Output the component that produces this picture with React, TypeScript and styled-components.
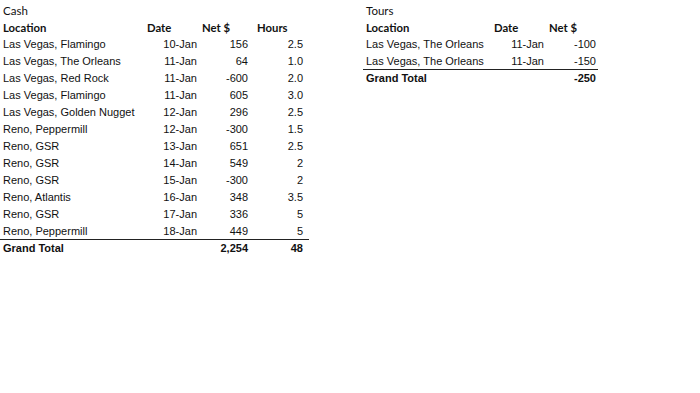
import styled, { createGlobalStyle } from 'styled-components'

const GlobalStyle = createGlobalStyle`
  html, body {
    margin: 0;
    padding: 0;
    background: #fff;
  }
  body {
    width: 700px;
    height: 393px;
    overflow: hidden;
    font-family: 'Liberation Sans', Arial, sans-serif;
    color: #111;
  }
`

type Col = { width: number; align: 'left' | 'right' }

const cashCols: Col[] = [
  { width: 145, align: 'left' },
  { width: 55, align: 'right' },
  { width: 52, align: 'right' },
  { width: 57, align: 'right' },
]

const tourCols: Col[] = [
  { width: 129, align: 'left' },
  { width: 55, align: 'right' },
  { width: 51, align: 'right' },
]

const cashRows = [
  ['Las Vegas, Flamingo', '10-Jan', '156', '2.5'],
  ['Las Vegas, The Orleans', '11-Jan', '64', '1.0'],
  ['Las Vegas, Red Rock', '11-Jan', '-600', '2.0'],
  ['Las Vegas, Flamingo', '11-Jan', '605', '3.0'],
  ['Las Vegas, Golden Nugget', '12-Jan', '296', '2.5'],
  ['Reno, Peppermill', '12-Jan', '-300', '1.5'],
  ['Reno, GSR', '13-Jan', '651', '2.5'],
  ['Reno, GSR', '14-Jan', '549', '2'],
  ['Reno, GSR', '15-Jan', '-300', '2'],
  ['Reno, Atlantis', '16-Jan', '348', '3.5'],
  ['Reno, GSR', '17-Jan', '336', '5'],
  ['Reno, Peppermill', '18-Jan', '449', '5'],
]

const tourRows = [
  ['Las Vegas, The Orleans', '11-Jan', '-100'],
  ['Las Vegas, The Orleans', '11-Jan', '-150'],
]

const Page = styled.div`
  display: flex;
  align-items: flex-start;
  gap: 54px;
  padding-top: 2px;
`

const Sheet = styled.div<{ $cols: Col[] }>`
  display: grid;
  grid-template-columns: ${(p) => p.$cols.map((c) => `${c.width}px`).join(' ')};
  grid-auto-rows: 17px;
`

const Title = styled.div`
  grid-column: 1 / -1;
  padding-left: 3px;
  font-family: Lato, 'Liberation Sans', sans-serif;
  font-size: 11.5px;
  line-height: 17px;
  color: #111;
`

const Head = styled.div<{ $pl: number }>`
  padding-left: ${(p) => p.$pl}px;
  font-family: Lato, 'Liberation Sans', sans-serif;
  font-weight: 700;
  font-size: 11.3px;
  line-height: 17px;
  white-space: nowrap;
`

const Cell = styled.div<{ $align: 'left' | 'right'; $last?: boolean; $bold?: boolean; $pr: number }>`
  text-align: ${(p) => p.$align};
  padding-left: 3px;
  padding-right: ${(p) => p.$pr}px;
  font-size: 11px;
  line-height: 17px;
  white-space: nowrap;
  font-weight: ${(p) => (p.$bold ? 700 : 400)};
  border-bottom: ${(p) => (p.$last ? '1px solid #222' : 'none')};
  box-sizing: border-box;
`

const Table = ({
  title,
  cols,
  heads,
  headPads,
  rows,
  total,
  pads,
}: {
  title: string
  cols: Col[]
  heads: string[]
  headPads: number[]
  rows: string[][]
  total: string[]
  pads: number[]
}) => (
  <Sheet $cols={cols}>
    <Title>{title}</Title>
    {heads.map((h, i) => (
      <Head key={h} $pl={headPads[i]}>
        {h}
      </Head>
    ))}
    {rows.map((r, ri) =>
      r.map((v, ci) => (
        <Cell key={`${ri}-${ci}`} $align={cols[ci].align} $pr={pads[ci]} $last={ri === rows.length - 1}>
          {v}
        </Cell>
      ))
    )}
    {total.map((v, ci) => (
      <Cell key={`t-${ci}`} $align={cols[ci].align} $pr={pads[ci]} $bold>
        {v}
      </Cell>
    ))}
  </Sheet>
)

export default function App() {
  return (
    <>
      <GlobalStyle />
      <Page>
        <Table
          title="Cash"
          cols={cashCols}
          heads={['Location', 'Date', 'Net $', 'Hours']}
          headPads={[3, 2, 2, 5]}
          rows={cashRows}
          total={['Grand Total', '', '2,254', '48']}
          pads={[0, 3, 4, 6]}
        />
        <Table
          title="Tours"
          cols={tourCols}
          heads={['Location', 'Date', 'Net $']}
          headPads={[3, 2, 2]}
          rows={tourRows}
          total={['Grand Total', '', '-250']}
          pads={[0, 3, 2]}
        />
      </Page>
    </>
  )
}
